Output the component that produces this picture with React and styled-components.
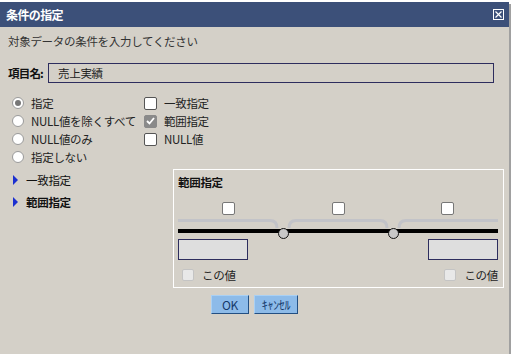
import React from 'react';
import styled, { createGlobalStyle } from 'styled-components';

const Global = createGlobalStyle`
html, body { margin: 0; padding: 0; background: #ffffff; }
body { font-family: "Noto Sans CJK JP", "Liberation Sans", sans-serif; font-size: 11.5px; letter-spacing: -0.3px; }
`

const Window = styled.div`
margin-top: 2px;
width: 509px;
height: 352px;
background: #d4d0c8;
box-shadow: 2px 2px 0 #a0a0a0;
display: flex;
flex-direction: column;
`

const TitleBar = styled.div`
height: 25px;
background: #3c5079;
display: flex;
align-items: center;
justify-content: space-between;
padding: 0 5px 0 6px;
`

const TitleText = styled.span`
color: #fff;
font-weight: 700;
font-size: 12px;
letter-spacing: -0.6px;
`

const Body = styled.div`
padding: 6px 5px 0 8px;
display: flex;
flex-direction: column;
`

const Subtitle = styled.div`
color: #333;
line-height: 16px;
`

const FieldRow = styled.div`
display: flex;
align-items: center;
margin-top: 14px;
`

const Label = styled.span`
font-weight: 700;
width: 40px;
letter-spacing: -0.8px;
white-space: nowrap;
color: #111;
`

const NameBox = styled.div`
width: 435px;
height: 18px;
border: 1px solid #2d2d5e;
padding-left: 9px;
line-height: 18px;
color: #222;
`

const Options = styled.div`
display: flex;
margin-top: 11px;
padding-left: 4px;
`

const Column = styled.div`
display: flex;
flex-direction: column;
width: ${p => p.width}px;
`

const OptRow = styled.div`
height: 18px;
display: flex;
align-items: center;
gap: 7px;
white-space: nowrap;
color: #222;
`

const Radio = styled.span`
flex: none;
width: 10px;
height: 10px;
border-radius: 50%;
border: 1px solid #9a9a9a;
background: #fff;
display: flex;
align-items: center;
justify-content: center;
&::after {
  content: '';
  width: 6px;
  height: 6px;
  border-radius: 50%;
  background: ${p => (p.on ? '#777' : 'transparent')};
}
`

const Check = styled.span`
flex: none;
width: 11px;
height: 11px;
border-radius: 2px;
border: 1px solid ${p => (p.on ? '#8a8a8a' : '#555')};
background: ${p => (p.on ? '#8a8a8a' : '#fff')};
display: flex;
align-items: center;
justify-content: center;
`

const Lower = styled.div`
display: flex;
margin-top: 3px;
`

const Links = styled.div`
width: 165px;
padding-left: 5px;
display: flex;
flex-direction: column;
`

const LinkRow = styled.div`
display: flex;
align-items: center;
gap: 8px;
height: 16px;
margin-top: ${p => p.top}px;
font-weight: ${p => (p.bold ? 700 : 400)};
color: #111;
&::before {
  content: '';
  border-left: 5px solid #1b2fd0;
  border-top: 5px solid transparent;
  border-bottom: 5px solid transparent;
}
`

const Panel = styled.div`
width: 321px;
border: 1px solid #fff;
padding: 5px 5px 6px 4px;
display: flex;
flex-direction: column;
`

const PanelTitle = styled.div`
font-weight: 700;
line-height: 14px;
color: #111;
`

const BoxRow = styled.div`
display: flex;
justify-content: space-between;
padding: 0 44px;
margin-top: 13px;
`

const SmallBox = styled.span`
width: 11px;
height: 11px;
border: 1px solid #777;
border-radius: 2px;
background: #fff;
`

const Track = styled.div`
position: relative;
height: 21px;
margin-top: 3px;
`

const Handle = styled.span`
position: absolute;
top: 10px;
left: ${p => p.x}px;
width: 9px;
height: 9px;
border-radius: 50%;
border: 1px solid #111;
background: #c8c8c8;
`

const InputRow = styled.div`
display: flex;
justify-content: space-between;
`

const ValueBox = styled.div`
width: 68px;
height: 19px;
border: 1px solid #2d2d5e;
background: #dedede;
`

const ThisRow = styled.div`
display: flex;
justify-content: space-between;
margin-top: 8px;
padding: 0 0 0 4px;
`

const ThisValue = styled.span`
display: flex;
align-items: center;
gap: 8px;
color: #222;
height: 13px;
&::before {
  content: '';
  width: 10px;
  height: 10px;
  border: 1px solid #c4c4c4;
  border-radius: 2px;
  background: #e8e8e8;
}
`

const Buttons = styled.div`
display: flex;
justify-content: center;
gap: 5px;
margin-top: 7px;
padding-right: 3px;
`

const Button = styled.button`
height: 19px;
width: ${p => p.w}px;
padding: 0;
background: #8dbbe9;
border: 1px solid #a9d0f4;
border-right-color: #234f82;
border-bottom-color: #234f82;
color: #163a6b;
font-family: "Noto Sans CJK JP", "Liberation Sans", sans-serif;
font-size: 12px;
letter-spacing: -0.3px;
line-height: 16px;
`

const Tick = () => (
  <svg width="9" height="8" viewBox="0 0 9 8">
    <path d="M1 4 L3.5 6.5 L8 1" stroke="#fff" strokeWidth="1.8" fill="none" />
  </svg>
)

const Close = () => (
  <svg width="11" height="11" viewBox="0 0 11 11">
    <rect x="0.5" y="0.5" width="10" height="10" fill="none" stroke="#fff" />
    <path d="M2.5 2.5 L8.5 8.5 M8.5 2.5 L2.5 8.5" stroke="#fff" strokeWidth="1.2" />
  </svg>
)

const radios = ['指定', 'NULL値を除くすべて', 'NULL値のみ', '指定しない']
const checks = [['一致指定', false], ['範囲指定', true], ['NULL値', false]]

export default function App() {
  return (
    <>
      <Global />
      <Window>
        <TitleBar>
          <TitleText>条件の指定</TitleText>
          <Close />
        </TitleBar>
        <Body>
          <Subtitle>対象データの条件を入力してください</Subtitle>
          <FieldRow>
            <Label>項目名:</Label>
            <NameBox>売上実績</NameBox>
          </FieldRow>
          <Options>
            <Column width={132}>
              {radios.map((r, i) => (
                <OptRow key={r}>
                  <Radio on={i === 0} />
                  {r}
                </OptRow>
              ))}
            </Column>
            <Column width={120}>
              {checks.map(([c, on]) => (
                <OptRow key={c}>
                  <Check on={on}>{on && <Tick />}</Check>
                  {c}
                </OptRow>
              ))}
            </Column>
          </Options>
          <Lower>
            <Links>
              <LinkRow top={3}>一致指定</LinkRow>
              <LinkRow top={6} bold>範囲指定</LinkRow>
            </Links>
            <Panel>
              <PanelTitle>範囲指定</PanelTitle>
              <BoxRow>
                <SmallBox />
                <SmallBox />
                <SmallBox />
              </BoxRow>
              <Track>
                <svg width="320" height="21" viewBox="0 0 320 21">
                  <g stroke="#c2c3c8" strokeWidth="3" fill="none">
                    <path d="M0 2.5 H92 Q99 2.5 99 10" />
                    <path d="M111 10 Q111 2.5 118 2.5 H202 Q209 2.5 209 10" />
                    <path d="M221 10 Q221 2.5 228 2.5 H320" />
                  </g>
                  <rect x="0" y="11" width="320" height="4" fill="#000" />
                </svg>
                <Handle x={100} />
                <Handle x={210} />
              </Track>
              <InputRow>
                <ValueBox />
                <ValueBox />
              </InputRow>
              <ThisRow>
                <ThisValue>この値</ThisValue>
                <ThisValue>この値</ThisValue>
              </ThisRow>
            </Panel>
          </Lower>
          <Buttons>
            <Button w={38}>OK</Button>
            <Button w={44}>ｷｬﾝｾﾙ</Button>
          </Buttons>
        </Body>
      </Window>
    </>
  )
}
